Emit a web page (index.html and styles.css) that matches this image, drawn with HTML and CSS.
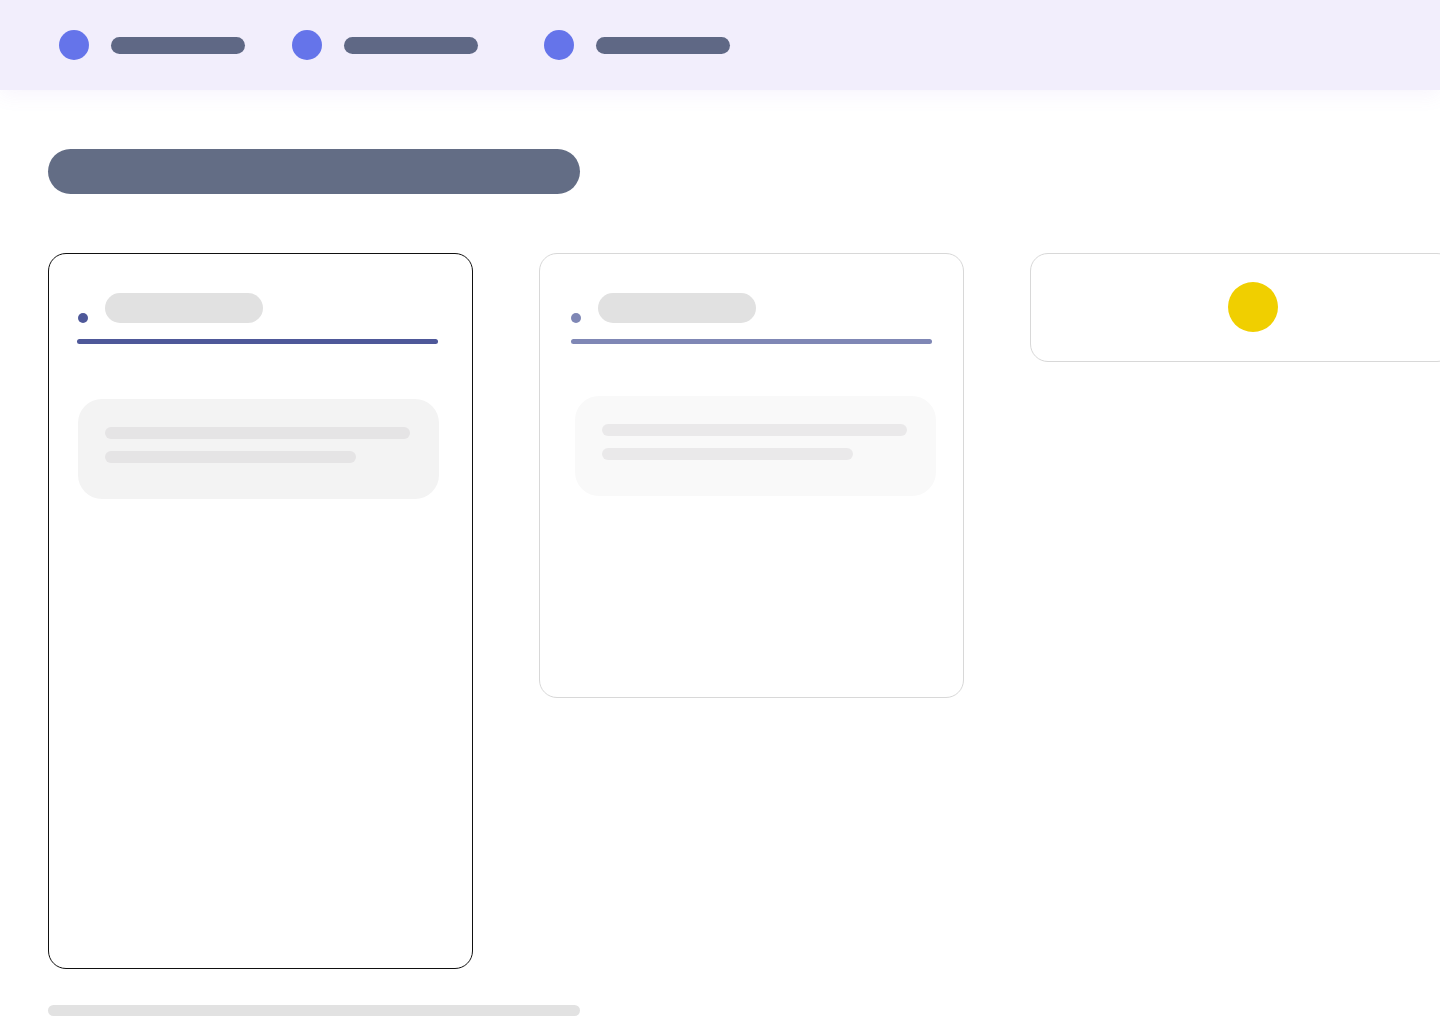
FILE: index.html
```html
<!DOCTYPE html>
<html lang="en">
<head>
<meta charset="utf-8">
<title>Board</title>
<link rel="stylesheet" href="styles.css">
</head>
<body>
<header class="topbar">
  <nav class="nav">
    <div class="nav-item"><span class="nav-dot"></span><span class="nav-label"></span></div>
    <div class="nav-item"><span class="nav-dot"></span><span class="nav-label"></span></div>
    <div class="nav-item nav-item--far"><span class="nav-dot"></span><span class="nav-label"></span></div>
  </nav>
</header>
<main class="page">
  <div class="title-bar"></div>
  <section class="columns">
    <article class="card card--active">
      <div class="card-head">
        <span class="card-dot"></span>
        <span class="card-pill"></span>
      </div>
      <div class="card-rule"></div>
      <div class="task">
        <span class="task-line task-line--long"></span>
        <span class="task-line task-line--short"></span>
      </div>
    </article>
    <article class="card card--muted">
      <div class="card-head">
        <span class="card-dot"></span>
        <span class="card-pill"></span>
      </div>
      <div class="card-rule"></div>
      <div class="task">
        <span class="task-line task-line--long"></span>
        <span class="task-line task-line--short"></span>
      </div>
    </article>
    <article class="card card--add">
      <span class="add-dot"></span>
    </article>
  </section>
  <div class="footer-bar"></div>
</main>
</body>
</html>
```

FILE: styles.css
```css
* { box-sizing: border-box; }

html, body {
  margin: 0;
  padding: 0;
  background: #ffffff;
  font-family: "Inter", "Liberation Sans", sans-serif;
  overflow: hidden;
}

.topbar {
  height: 90px;
  background: #f2eefc;
  box-shadow: 0 6px 18px rgba(150, 110, 220, 0.07);
  position: relative;
  z-index: 1;
}

.nav {
  display: flex;
  align-items: center;
  height: 100%;
  padding-left: 59px;
  gap: 47px;
}

.nav-item {
  display: flex;
  align-items: center;
  gap: 22px;
}

.nav-item--far { margin-left: 19px; }

.nav-dot {
  width: 30px;
  height: 30px;
  border-radius: 50%;
  background: #6574ea;
}

.nav-label {
  width: 134px;
  height: 17px;
  border-radius: 9px;
  background: #5f6885;
}

.page {
  padding: 59px 0 0 48px;
}

.title-bar {
  width: 532px;
  height: 45px;
  border-radius: 23px;
  background: #636d85;
}

.columns {
  display: flex;
  align-items: flex-start;
  gap: 66px;
  margin-top: 59px;
}

.card {
  flex: 0 0 425px;
  width: 425px;
  border: 1px solid #d8d8d8;
  border-radius: 18px;
  background: #ffffff;
}

.card--active {
  border-color: #111111;
  height: 716px;
  padding: 39px 0 0 28px;
}

.card--muted {
  height: 445px;
  padding: 39px 0 0 31px;
}

.card-head {
  display: flex;
  align-items: flex-end;
  gap: 17px;
}

.card-dot {
  width: 10px;
  height: 10px;
  border-radius: 50%;
  margin-left: 1px;
  background: #4e5899;
}

.card-pill {
  width: 158px;
  height: 30px;
  border-radius: 15px;
  background: #e1e1e1;
}

.card-rule {
  width: 361px;
  height: 5px;
  margin-top: 16px;
  border-radius: 3px;
  background: #4e5899;
}

.task {
  display: flex;
  flex-direction: column;
  gap: 12px;
  width: 361px;
  height: 100px;
  margin-top: 55px;
  margin-left: 1px;
  padding: 28px 0 0 27px;
  border-radius: 24px;
  background: #f3f3f3;
}

.task-line {
  height: 12px;
  border-radius: 6px;
  background: #e5e4e5;
}

.task-line--long { width: 305px; }
.task-line--short { width: 251px; }

.card--muted .card-dot {
  margin-left: 0;
  background: #7f87b5;
}
.card--muted .card-rule { background: #7f87b5; }
.card--muted .task {
  margin-top: 52px;
  margin-left: 4px;
  background: #f9f9f9;
}
.card--muted .task-line { background: #eae9ea; }

.card--add {
  height: 109px;
  padding: 28px 0 0 197px;
  display: flex;
  align-items: flex-start;
}

.add-dot {
  width: 50px;
  height: 50px;
  border-radius: 50%;
  background: #f0cf00;
}

.footer-bar {
  width: 532px;
  height: 11px;
  margin-top: 36px;
  border-radius: 6px;
  background: #e2e2e2;
}
```
